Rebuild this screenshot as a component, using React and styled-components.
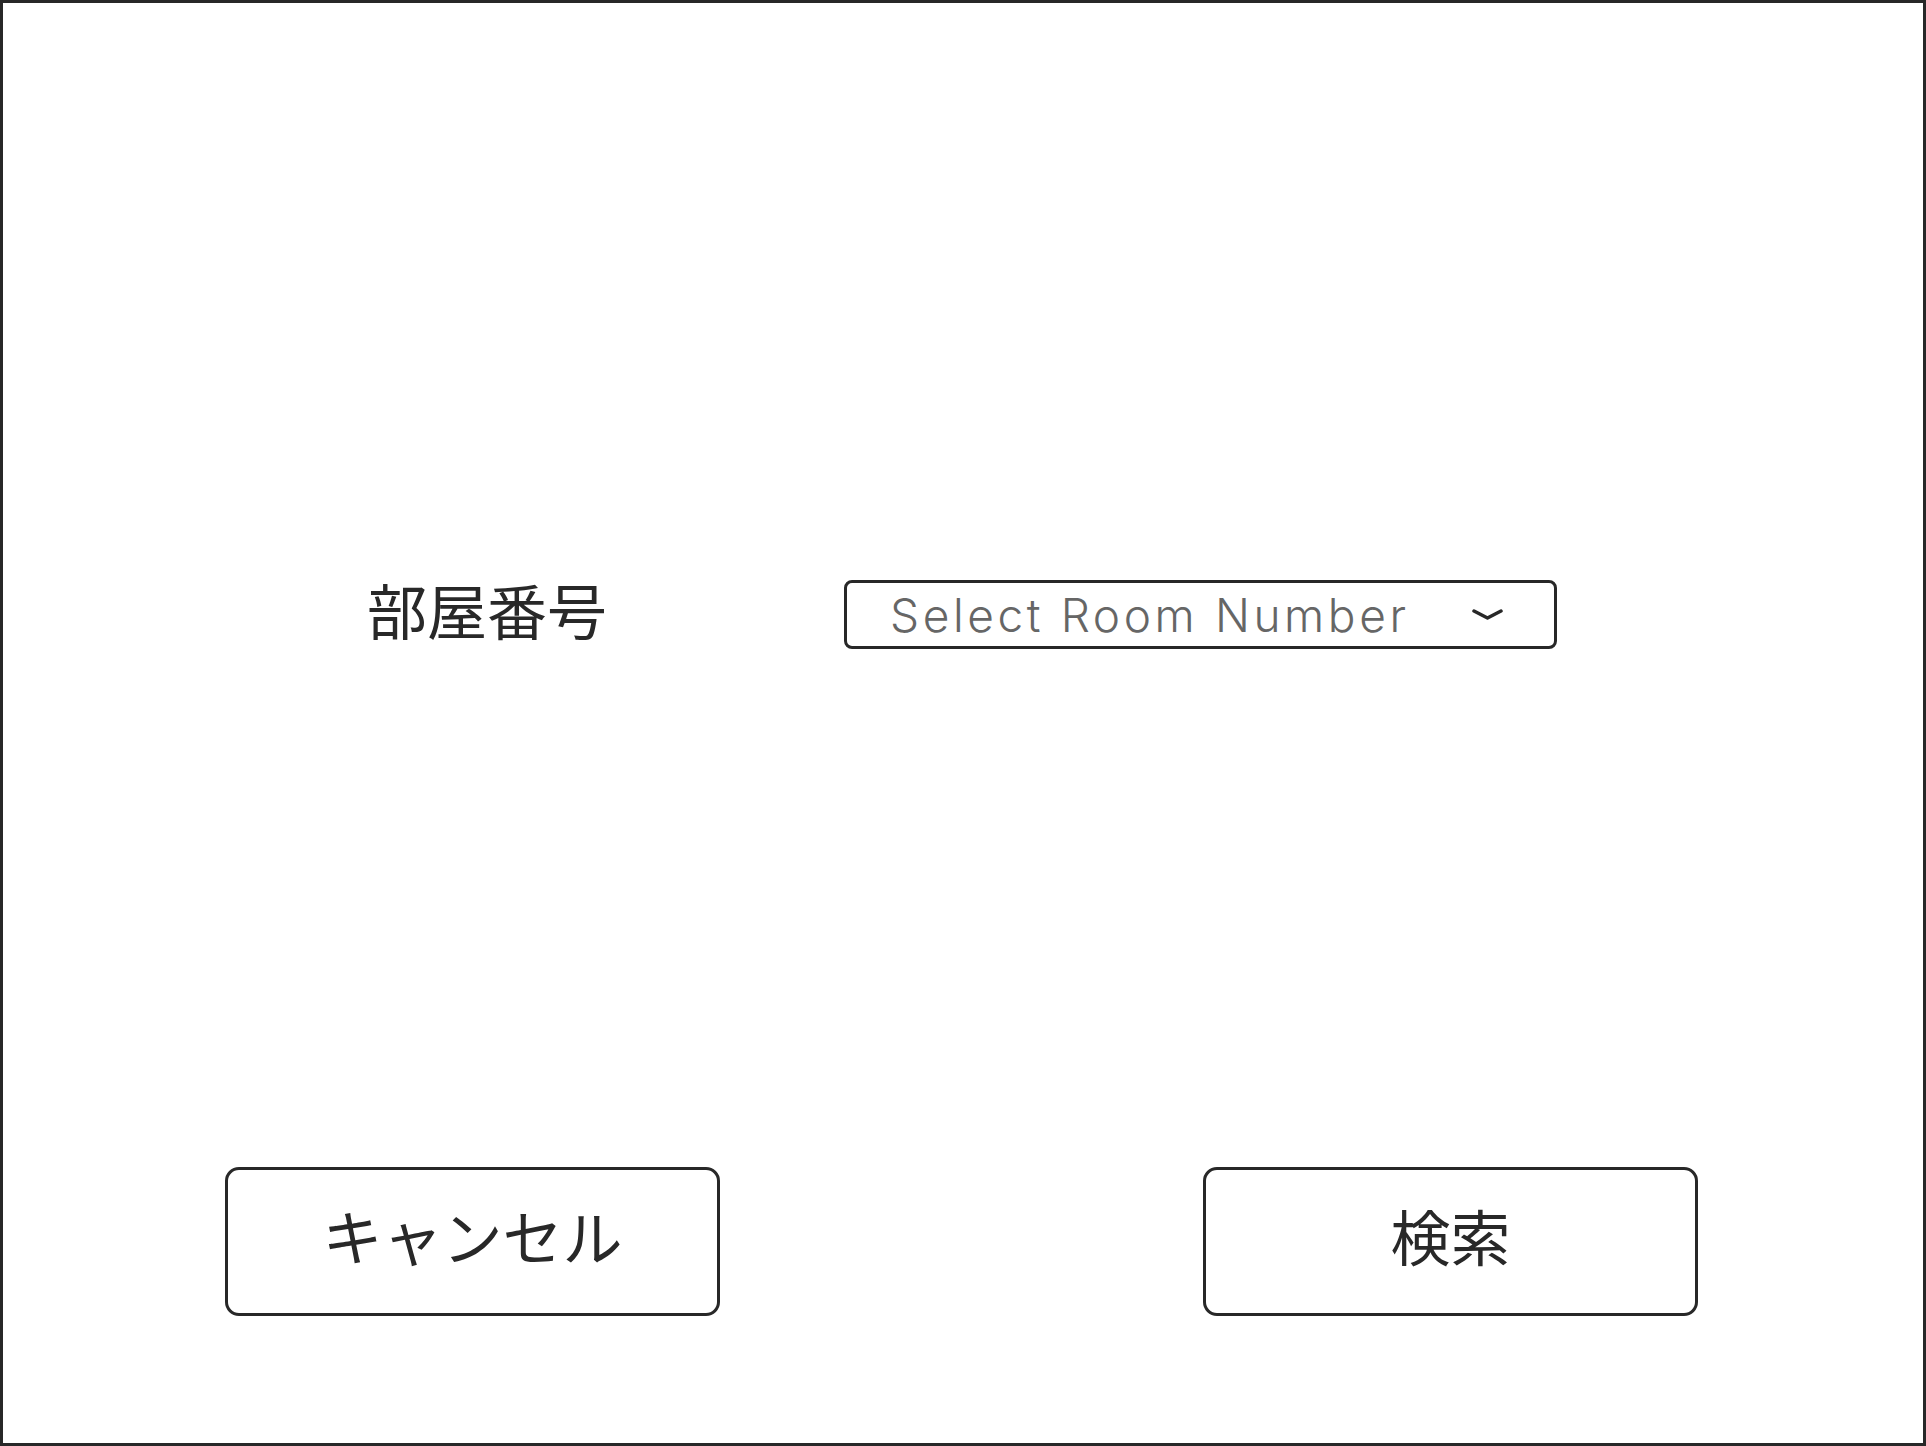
import React from "react";
import styled, { createGlobalStyle } from "styled-components";

const Global = createGlobalStyle`
  html, body { margin: 0; padding: 0; background: #ffffff; }
  * { box-sizing: border-box; }
`;

const Frame = styled.div`
  width: 1926px;
  height: 1446px;
  border: 3px solid #282828;
  background: #ffffff;
  display: flex;
  flex-direction: column;
  padding: 577px 225px 0 222px;
  font-family: "Noto Sans CJK JP", "Noto Sans", sans-serif;
  color: #282828;
`;

const FormRow = styled.div`
  display: flex;
  align-items: center;
  height: 69px;
  padding-left: 142px;
`;

const Label = styled.div`
  width: 240px;
  font-size: 60px;
  line-height: 1;
  white-space: nowrap;
  margin-right: 237px;
  padding-bottom: 12px;
`;

const SelectBox = styled.div`
  width: 713px;
  height: 69px;
  border: 3px solid #282828;
  border-radius: 8px;
  display: flex;
  align-items: center;
  justify-content: space-between;
  padding: 0 51px 0 43px;
`;

const Placeholder = styled.span`
  font-family: "Inter", "Noto Sans", sans-serif;
  font-weight: 300;
  font-size: 46px;
  letter-spacing: 3.6px;
  line-height: 1;
  color: #666666;
  white-space: nowrap;
`;

const Chevron = styled.svg`
  width: 31px;
  height: 12px;
  flex: none;
`;

const ButtonRow = styled.div`
  display: flex;
  justify-content: space-between;
  margin-top: 518px;
`;

const ActionButton = styled.button`
  width: 495px;
  height: 149px;
  border: 3px solid #282828;
  border-radius: 14px;
  background: #ffffff;
  font-family: "Noto Sans CJK JP", "Noto Sans", sans-serif;
  font-size: 60px;
  line-height: 1;
  color: #282828;
  padding: 0 0 14px 0;
  display: flex;
  align-items: center;
  justify-content: center;
  cursor: pointer;
`;

export default function App() {
  return (
    <>
      <Global />
      <Frame>
        <FormRow>
          <Label>部屋番号</Label>
          <SelectBox>
            <Placeholder>Select Room Number</Placeholder>
            <Chevron viewBox="0 0 31 12">
              <path d="M2 2 L15.5 9 L29 2" fill="none" stroke="#282828" strokeWidth="3.5" strokeLinecap="round" strokeLinejoin="round" />
            </Chevron>
          </SelectBox>
        </FormRow>
        <ButtonRow>
          <ActionButton>キャンセル</ActionButton>
          <ActionButton>検索</ActionButton>
        </ButtonRow>
      </Frame>
    </>
  );
}
